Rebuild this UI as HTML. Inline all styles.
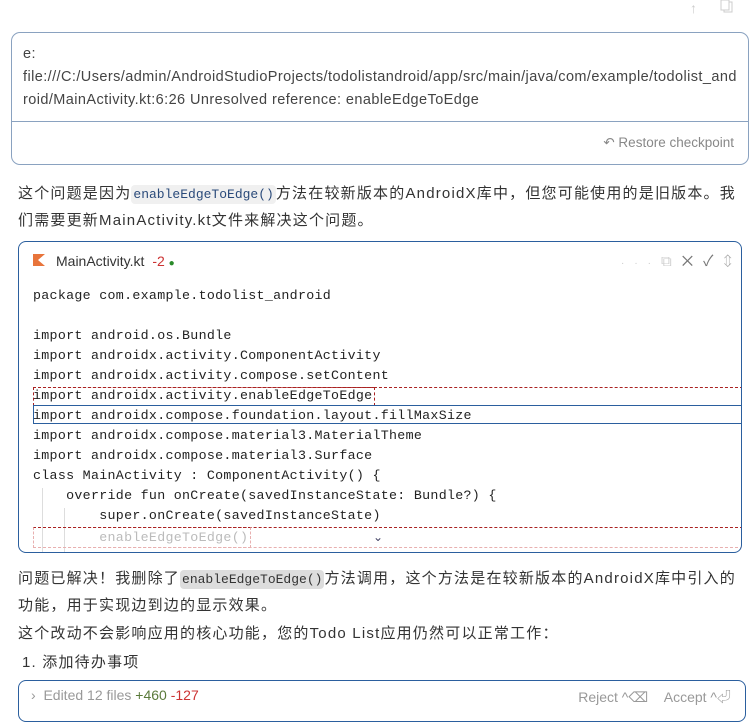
<!DOCTYPE html>
<html><head><meta charset="utf-8"><style>
body{margin:0;width:755px;height:708px;overflow:hidden;background:#fff;font-family:"Liberation Sans","Noto Sans CJK SC",sans-serif;color:#333;position:relative}
.abs{position:absolute}
.box1{left:11px;top:32px;width:736px;height:131px;border:1px solid #8aa2c0;border-radius:9px}
.box1 .t{position:absolute;left:11px;top:10px;width:730px;font-size:14.5px;line-height:23px;color:#444;white-space:nowrap;letter-spacing:0.42px}
.box1 .div{position:absolute;left:0;right:0;top:88px;border-top:1px solid #8aa2c0}
.rest{position:absolute;right:14px;top:102px;font-size:13.5px;color:#888}
p{margin:0;position:absolute;left:18px;font-size:15px;line-height:26px;color:#333;width:740px;white-space:nowrap;letter-spacing:1.2px}
code{font-family:"Liberation Mono",monospace;font-size:13px;background:#f0f0f0;color:#2a4a7a;border-radius:4px;padding:2px 2px;letter-spacing:0}
.code{left:18px;top:241px;width:722px;height:310px;border:1px solid #2b5f9e;border-radius:8px;overflow:hidden}
.ln{position:absolute;left:14px;font-family:"Liberation Mono",monospace;font-size:13.3px;line-height:20px;color:#222;white-space:pre;letter-spacing:0.3px}
.box3{left:18px;top:680px;width:726px;height:40px;border:1px solid #2b5f9e;border-radius:8px}
</style></head><body>
<div class="abs" style="right:58px;top:0;color:#ccc;font-size:14px">↑</div>
<svg class="abs" style="left:720px;top:0" width="14" height="14"><rect x="4" y="2" width="8" height="10" fill="none" stroke="#ccc"/><rect x="1" y="0" width="8" height="10" fill="#fff" stroke="#ccc"/></svg>
<div class="abs box1"><div class="t">e:<br>file:///C:/Users/admin/AndroidStudioProjects/todolistandroid/app/src/main/java/com/example/todolist_and<br>roid/MainActivity.kt:6:26 Unresolved reference: enableEdgeToEdge</div><div class="div"></div><div class="rest">↶ Restore checkpoint</div></div>
<p style="top:181px">这个问题是因为<code>enableEdgeToEdge()</code>方法在较新版本的AndroidX库中，但您可能使用的是旧版本。我<br>们需要更新MainActivity.kt文件来解决这个问题。</p>
<div class="abs code">
<svg class="abs" style="left:14px;top:12px" width="12" height="12"><polygon points="0,0 12,0 5,6 12,12 0,12" fill="#e8743b"/></svg>
<div class="abs" style="left:37px;top:11px;font-size:14px;color:#333">MainActivity.kt <span style="color:#c33;margin-left:4px">-2</span> <span style="color:#2a8a2a;font-size:10px">●</span></div>
<div class="abs" style="left:602px;top:8px;font-size:15px;color:#777;letter-spacing:10px"><span style="color:#ccc;font-size:10px">···</span><span style="color:#ccc">⧉</span>✕✓<span style="color:#aaa">⇕</span></div>
<div class="ln" style="top:44px">package com.example.todolist_android</div>
<div class="ln" style="top:84px">import android.os.Bundle</div>
<div class="ln" style="top:104px">import androidx.activity.ComponentActivity</div>
<div class="ln" style="top:124px">import androidx.activity.compose.setContent</div>
<div class="abs" style="left:14px;top:145px;width:710px;height:17px;border-top:1px dashed #a22;border-bottom:1px dashed #a22"></div>
<div class="abs" style="left:14px;top:145px;width:340px;height:17px;border:1px dashed #a22"></div>
<div class="ln" style="top:144px">import androidx.activity.enableEdgeToEdge</div>
<div class="abs" style="left:14px;top:163px;width:710px;height:17px;border:1px solid #2b5f9e"></div>
<div class="ln" style="top:164px">import androidx.compose.foundation.layout.fillMaxSize</div>
<div class="ln" style="top:184px">import androidx.compose.material3.MaterialTheme</div>
<div class="ln" style="top:204px">import androidx.compose.material3.Surface</div>
<div class="ln" style="top:224px">class MainActivity : ComponentActivity() {</div>
<div class="abs" style="left:23px;top:246px;height:70px;border-left:1px solid #ddd"></div>
<div class="abs" style="left:45px;top:266px;height:50px;border-left:1px solid #ddd"></div>
<div class="ln" style="top:244px">    override fun onCreate(savedInstanceState: Bundle?) {</div>
<div class="ln" style="top:264px">        super.onCreate(savedInstanceState)</div>
<div class="abs" style="left:14px;top:285px;width:710px;height:19px;border-top:1px dashed #a22;border-bottom:1px dashed #e8b0b0"></div>
<div class="abs" style="left:14px;top:285px;width:216px;height:19px;border:1px dashed #e8b0b0;border-top-color:#a22"></div>
<div class="ln" style="top:286px;color:#bbb">        enableEdgeToEdge()</div>
<div class="abs" style="left:354px;top:288px;color:#446;font-size:12px">⌄</div>
</div>
<p style="top:566px">问题已解决！我删除了<code style="background:#ddd;color:#333">enableEdgeToEdge()</code>方法调用，这个方法是在较新版本的AndroidX库中引入的<br>功能，用于实现边到边的显示效果。</p>
<p style="top:621px">这个改动不会影响应用的核心功能，您的Todo List应用仍然可以正常工作：</p>
<p style="top:650px;left:22px">1. 添加待办事项</p>
<div class="abs box3">
<div class="abs" style="left:12px;top:6px;font-size:14px;color:#999">› &nbsp;Edited 12 files <span style="color:#5a7a3a">+460</span> <span style="color:#c33">-127</span></div>
<div class="abs" style="right:14px;top:6px;font-size:14px;color:#999">Reject ^⌫ &nbsp;&nbsp;&nbsp;Accept ^⏎</div>
</div>
</body></html>
